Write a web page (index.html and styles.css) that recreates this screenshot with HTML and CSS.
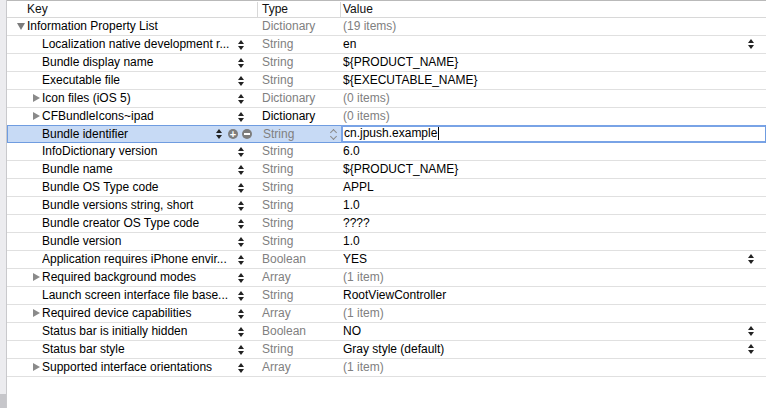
FILE: index.html
```html
<!DOCTYPE html>
<html>
<head>
<meta charset="utf-8">
<link rel="stylesheet" href="styles.css">
</head>
<body>
<div class="window">
  <div class="strip"><div class="strip-bottom"></div></div>
  <div class="plist">
    <div class="row header">
      <div class="c key"><span class="hk">Key</span></div>
      <div class="c type">Type</div>
      <div class="c value">Value</div>
    </div>

    <div class="row">
      <div class="c key lvl0"><span class="disc down"></span><span class="kt">Information Property List</span></div>
      <div class="c type">Dictionary</div>
      <div class="c value gray">(19 items)</div>
    </div>

    <div class="row">
      <div class="c key lvl1"><span class="kt">Localization native development r...</span><span class="step"></span></div>
      <div class="c type">String</div>
      <div class="c value">en<span class="step vstep"></span></div>
    </div>
    <div class="row">
      <div class="c key lvl1"><span class="kt">Bundle display name</span><span class="step"></span></div>
      <div class="c type">String</div>
      <div class="c value">${PRODUCT_NAME}</div>
    </div>
    <div class="row">
      <div class="c key lvl1"><span class="kt">Executable file</span><span class="step"></span></div>
      <div class="c type">String</div>
      <div class="c value">${EXECUTABLE_NAME}</div>
    </div>
    <div class="row">
      <div class="c key lvl1"><span class="disc right"></span><span class="kt">Icon files (iOS 5)</span><span class="step"></span></div>
      <div class="c type">Dictionary</div>
      <div class="c value gray">(0 items)</div>
    </div>
    <div class="row">
      <div class="c key lvl1"><span class="disc right"></span><span class="kt">CFBundleIcons~ipad</span><span class="step"></span></div>
      <div class="c type dark">Dictionary</div>
      <div class="c value gray">(0 items)</div>
    </div>
    <div class="row selected">
      <div class="c key lvl1"><span class="kt">Bundle identifier</span><span class="step sel-step"></span><span class="circ">+</span><span class="circ minus"></span></div>
      <div class="c type">String<span class="popup"></span></div>
      <div class="c value edit"><span class="field">cn.jpush.example<span class="caret"></span></span></div>
    </div>
    <div class="row">
      <div class="c key lvl1"><span class="kt">InfoDictionary version</span><span class="step"></span></div>
      <div class="c type">String</div>
      <div class="c value">6.0</div>
    </div>
    <div class="row">
      <div class="c key lvl1"><span class="kt">Bundle name</span><span class="step"></span></div>
      <div class="c type">String</div>
      <div class="c value">${PRODUCT_NAME}</div>
    </div>
    <div class="row">
      <div class="c key lvl1"><span class="kt">Bundle OS Type code</span><span class="step"></span></div>
      <div class="c type">String</div>
      <div class="c value">APPL</div>
    </div>
    <div class="row">
      <div class="c key lvl1"><span class="kt">Bundle versions string, short</span><span class="step"></span></div>
      <div class="c type">String</div>
      <div class="c value">1.0</div>
    </div>
    <div class="row">
      <div class="c key lvl1"><span class="kt">Bundle creator OS Type code</span><span class="step"></span></div>
      <div class="c type">String</div>
      <div class="c value">????</div>
    </div>
    <div class="row">
      <div class="c key lvl1"><span class="kt">Bundle version</span><span class="step"></span></div>
      <div class="c type">String</div>
      <div class="c value">1.0</div>
    </div>
    <div class="row">
      <div class="c key lvl1"><span class="kt">Application requires iPhone envir...</span><span class="step"></span></div>
      <div class="c type">Boolean</div>
      <div class="c value">YES<span class="step vstep"></span></div>
    </div>
    <div class="row">
      <div class="c key lvl1"><span class="disc right"></span><span class="kt">Required background modes</span><span class="step"></span></div>
      <div class="c type">Array</div>
      <div class="c value gray">(1 item)</div>
    </div>
    <div class="row">
      <div class="c key lvl1"><span class="kt">Launch screen interface file base...</span><span class="step"></span></div>
      <div class="c type">String</div>
      <div class="c value">RootViewController</div>
    </div>
    <div class="row">
      <div class="c key lvl1"><span class="disc right"></span><span class="kt">Required device capabilities</span><span class="step"></span></div>
      <div class="c type">Array</div>
      <div class="c value gray">(1 item)</div>
    </div>
    <div class="row">
      <div class="c key lvl1"><span class="kt">Status bar is initially hidden</span><span class="step"></span></div>
      <div class="c type">Boolean</div>
      <div class="c value">NO<span class="step vstep"></span></div>
    </div>
    <div class="row">
      <div class="c key lvl1"><span class="kt">Status bar style</span><span class="step"></span></div>
      <div class="c type">String</div>
      <div class="c value">Gray style (default)<span class="step vstep"></span></div>
    </div>
    <div class="row">
      <div class="c key lvl1"><span class="disc right"></span><span class="kt">Supported interface orientations</span><span class="step"></span></div>
      <div class="c type">Array</div>
      <div class="c value gray">(1 item)</div>
    </div>
  </div>
</div>
</body>
</html>
```
FILE: styles.css
```css
* { box-sizing: border-box; }
html, body { margin: 0; padding: 0; background: #fff; }
body {
  width: 766px;
  height: 408px;
  overflow: hidden;
  font-family: "Liberation Sans", Arial, sans-serif;
  font-size: 12px;
  color: #000;
}
.window { display: flex; height: 408px; }
.strip {
  width: 7px;
  flex: none;
  background: #ececef;
  border-right: 1px solid #c9c9cc;
  display: flex;
  flex-direction: column;
  justify-content: flex-end;
}
.strip-bottom { height: 14px; background: #c6c6ca; }
.plist { flex: 1; display: flex; flex-direction: column; }
.row {
  display: grid;
  grid-template-columns: 250px 83px 1fr;
  height: 18px;
  border-bottom: 1px solid #e0e0e0;
  align-items: center;
  line-height: 17px;
}
.row.header {
  height: 18px;
  border-top: 1px solid #b9b9b9;
  border-bottom: 1px solid #d8d8d8;
  background: #fff;
}
.header .c { color: #111; }
.header .type, .header .value { border-left: 1px solid #d8d8d8; height: 16px; }
.header .type { padding-left: 4px; }
.header .value { padding-left: 2px; }
.hk { padding-left: 11px; }
.c { height: 17px; display: flex; align-items: center; white-space: nowrap; position: relative; }
.key { padding-left: 9px; }
.lvl0 { padding-left: 10px; }
.lvl1 { padding-left: 35px; }
.kt { flex: 1; overflow: hidden; }
.type { color: #808080; padding-left: 5px; }
.type.dark { color: #000; }
.value { padding-left: 3px; }
.gray { color: #808080; }
.disc { width: 10px; flex: none; height: 17px; position: relative; }
.disc.down::before {
  content: ""; position: absolute; left: 0; top: 5px;
  border-left: 4px solid transparent; border-right: 4px solid transparent;
  border-top: 7px solid #7c7c7c;
}
.disc.right::before {
  content: ""; position: absolute; left: 1px; top: 4px;
  border-top: 4px solid transparent; border-bottom: 4px solid transparent;
  border-left: 7px solid #8a8a8a;
}
.lvl1 .disc { margin-left: -10px; }
.step {
  width: 7px; height: 12px; flex: none; position: relative; margin-right: 12px; margin-left: 4px;
}
.step::before {
  content: ""; position: absolute; left: 0; top: 1px;
  border-left: 3px solid transparent; border-right: 3px solid transparent;
  border-bottom: 4px solid #222;
}
.step::after {
  content: ""; position: absolute; left: 0; bottom: 1px;
  border-left: 3px solid transparent; border-right: 3px solid transparent;
  border-top: 4px solid #222;
}
.vstep { position: absolute; right: 11px; top: 2px; margin: 0; }
.selected {
  background: #c7daf5;
  border: 1px solid #6f9ce0;
  height: 18px;
  margin-top: -1px;
}
.selected .c { height: 16px; }
.selected .key { padding-left: 34px; }
.sel-step { margin-right: 5px; }
.circ {
  width: 10px; height: 10px; border-radius: 50%; background: #7d7d7d; color: #fff;
  font-size: 11px; font-weight: bold; line-height: 10px; text-align: center; flex: none;
  margin-right: 4px;
}
.circ.minus { position: relative; margin-right: 6px; }
.circ.minus::after {
  content: ""; position: absolute; left: 2px; top: 4px; width: 6px; height: 2px; background: #fff;
}
.popup {
  position: absolute; right: 3px; top: 2px; width: 9px; height: 13px;
}
.popup::before, .popup::after {
  content: ""; position: absolute; left: 2px; width: 4px; height: 4px;
  border-left: 1px solid #8a8a8a; border-top: 1px solid #8a8a8a; transform: rotate(45deg);
}
.popup::before { top: 2px; }
.popup::after { top: 6px; transform: rotate(225deg); }
.edit { padding: 0; height: 18px; }
.field {
  display: flex; align-items: center; height: 18px; width: 100%;
  background: #fff; border: 2px solid #79a3e6; border-right: none; margin-top: -1px;
  padding-left: 1px; color: #000;
}
.caret { width: 1px; height: 13px; background: #000; margin-left: 1px; }
```
